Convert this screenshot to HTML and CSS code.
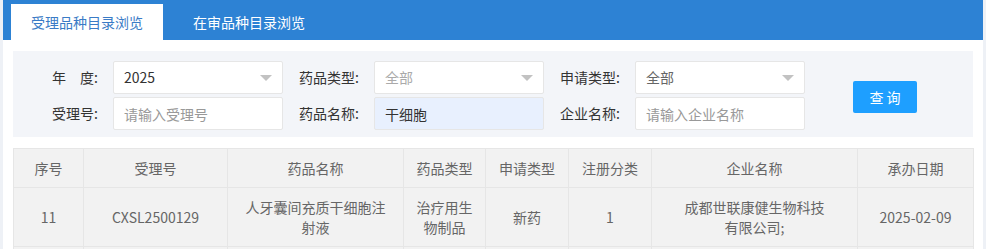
FILE: index.html
```html
<!DOCTYPE html>
<html lang="zh-CN">
<head>
    <meta charset="UTF-8">
    <meta name="viewport" content="width=device-width, initial-scale=1.0">
    <title>受理品种目录浏览</title>
    <link rel="stylesheet" href="styles.css">
</head>
<body>
    <div class="page">
        <div class="tabs">
            <div class="tab active">受理品种目录浏览</div>
            <div class="tab">在审品种目录浏览</div>
        </div>

        <form class="filter">
            <div class="fields">
                <label>年　度:</label>
                <div class="select"><span class="value">2025</span><i class="arrow"></i></div>
                <label>药品类型:</label>
                <div class="select"><span class="value muted">全部</span><i class="arrow"></i></div>
                <label>申请类型:</label>
                <div class="select"><span class="value grey">全部</span><i class="arrow"></i></div>

                <label>受理号:</label>
                <input type="text" class="input" placeholder="请输入受理号">
                <label>药品名称:</label>
                <input type="text" class="input filled" value="干细胞">
                <label>企业名称:</label>
                <input type="text" class="input" placeholder="请输入企业名称">
            </div>
            <button type="button" class="btn">查 询</button>
        </form>

        <table class="list">
            <colgroup>
                <col style="width: 70px">
                <col style="width: 144px">
                <col style="width: 176px">
                <col style="width: 82px">
                <col style="width: 83px">
                <col style="width: 83px">
                <col style="width: 206px">
                <col style="width: 116px">
            </colgroup>
            <thead>
                <tr>
                    <th>序号</th>
                    <th>受理号</th>
                    <th class="name">药品名称</th>
                    <th>药品类型</th>
                    <th>申请类型</th>
                    <th>注册分类</th>
                    <th class="wide">企业名称</th>
                    <th>承办日期</th>
                </tr>
            </thead>
            <tbody>
                <tr>
                    <td>11</td>
                    <td>CXSL2500129</td>
                    <td class="name">人牙囊间充质干细胞注射液</td>
                    <td>治疗用生物制品</td>
                    <td>新药</td>
                    <td>1</td>
                    <td class="wide">成都世联康健生物科技有限公司;</td>
                    <td>2025-02-09</td>
                </tr>
                <tr>
                    <td></td><td></td><td class="name"></td><td></td>
                    <td></td><td></td><td class="wide"></td><td></td>
                </tr>
            </tbody>
        </table>
    </div>
</body>
</html>
```

FILE: styles.css
```css
body {
    margin: 0;
    padding: 0;
    background-color: #eef1f6;
    font-family: "Noto Sans CJK SC", "Liberation Sans", sans-serif;
    font-size: 14px;
    color: #333;
}
.page {
    margin: 0 3px;
    min-height: 249px;
    background-color: #ffffff;
    overflow: hidden;
}
.tabs {
    display: flex;
    height: 40px;
    padding: 4px 0 0 8px;
    box-sizing: border-box;
    background-color: #2d82d4;
}
.tab {
    height: 36px;
    line-height: 36px;
    padding: 0 20px;
    margin-right: 10px;
    color: #ffffff;
    font-size: 14px;
}
.tab.active {
    background-color: #ffffff;
    color: #3a7bc6;
}
.filter {
    display: flex;
    align-items: center;
    margin: 11px 10px 0;
    padding: 10px 0 7px;
    background-color: #f3f5f9;
}
.fields {
    display: grid;
    grid-template-columns: 100px 170px 91px 170px 91px 170px;
    grid-auto-rows: 33px;
    row-gap: 3px;
}
.fields label {
    line-height: 33px;
    padding-right: 15px;
    text-align: right;
    color: #333;
    white-space: nowrap;
}
.select, .input {
    box-sizing: border-box;
    height: 33px;
    border: 1px solid #e6e6e6;
    border-radius: 2px;
    background-color: #ffffff;
    font-family: inherit;
    font-size: 14px;
    color: #333;
}
.select {
    position: relative;
    padding-left: 10px;
    line-height: 31px;
}
.select .muted {
    color: #aaa;
}
.select .grey {
    color: #666;
}
.arrow {
    position: absolute;
    right: 10px;
    top: 13px;
    width: 0;
    height: 0;
    border-left: 6px solid transparent;
    border-right: 6px solid transparent;
    border-top: 6px solid #c2c2c2;
}
.input {
    width: 170px;
    padding: 0 10px;
    outline: none;
}
.input::placeholder {
    color: #999;
}
.input.filled {
    background-color: #e8f0fe;
}
.btn {
    width: 64px;
    height: 32px;
    margin: 3px 0 0 48px;
    border: none;
    border-radius: 2px;
    background-color: #1e9fff;
    color: #ffffff;
    font-family: inherit;
    font-size: 14px;
    cursor: pointer;
}
.list {
    width: 960px;
    margin: 11px 10px 0;
    border-collapse: collapse;
    table-layout: fixed;
    color: #666;
}
.list th, .list td {
    border: 1px solid #e6e6e6;
    padding: 9px 8px;
    line-height: 20px;
    font-weight: normal;
    text-align: center;
    background-color: #f2f2f2;
}
.list td {
    height: 40px;
}
.list .name {
    padding: 9px 15px;
}
.list .wide {
    padding: 9px 30px;
}
```
